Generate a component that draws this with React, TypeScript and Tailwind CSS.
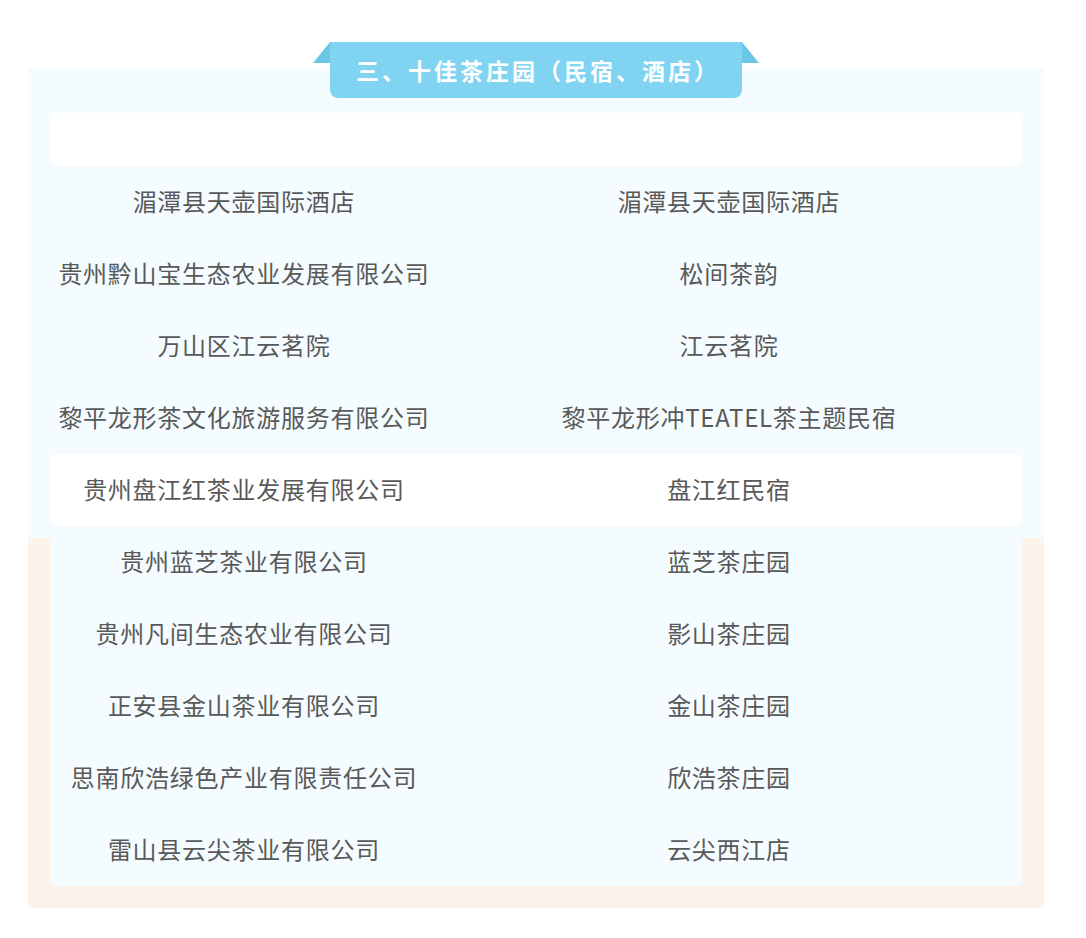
import React from 'react';

const rows: { left: string; right: string; white?: boolean }[] = [
  { left: '湄潭县天壶国际酒店', right: '湄潭县天壶国际酒店' },
  { left: '贵州黔山宝生态农业发展有限公司', right: '松间茶韵' },
  { left: '万山区江云茗院', right: '江云茗院' },
  { left: '黎平龙形茶文化旅游服务有限公司', right: '黎平龙形冲TEATEL茶主题民宿' },
  { left: '贵州盘江红茶业发展有限公司', right: '盘江红民宿', white: true },
  { left: '贵州蓝芝茶业有限公司', right: '蓝芝茶庄园' },
  { left: '贵州凡间生态农业有限公司', right: '影山茶庄园' },
  { left: '正安县金山茶业有限公司', right: '金山茶庄园' },
  { left: '思南欣浩绿色产业有限责任公司', right: '欣浩茶庄园' },
  { left: '雷山县云尖茶业有限公司', right: '云尖西江店' },
];

const App: React.FC = () => {
  return (
    <div
      className="min-h-screen bg-white pt-[42px]"
      style={{ fontFamily: '"Noto Sans CJK SC", "Noto Sans", sans-serif' }}
    >
      <div className="ml-[28px] w-[1016px]">
        {/* Title ribbon */}
        <div className="relative z-10 flex justify-center items-start h-[56px]">
          <svg width="17" height="21" viewBox="0 0 17 21" className="block">
            <polygon points="0,21 17,0 17,21" fill="#6cc6e6" />
          </svg>
          <div className="w-[412px] h-[56px] bg-[#80d4f1] rounded-b-[8px] flex items-center justify-center pl-[4px]">
            <span className="text-white font-bold text-[23px] tracking-[3px] leading-none">
              三、十佳茶庄园（民宿、酒店）
            </span>
          </div>
          <svg width="17" height="21" viewBox="0 0 17 21" className="block">
            <polygon points="0,0 17,21 0,21" fill="#6cc6e6" />
          </svg>
        </div>

        {/* Panel */}
        <div className="-mt-[30px] bg-[linear-gradient(to_bottom,#f4fcff_470px,#fef3ea_470px)] px-[23px] pt-[45px] pb-[22px]">
          <div className="h-[53px] bg-white rounded-[4px]" />
          {rows.map((r, i) => (
            <div
              key={i}
              className={
                r.white
                  ? 'grid grid-cols-[386px_1fr] h-[72px] items-center bg-white rounded-[4px]'
                  : 'grid grid-cols-[386px_1fr] h-[72px] items-center bg-[#f4fcff]'
              }
            >
              <div className="text-center text-[24px] tracking-[0.75px] text-[#595959] leading-none whitespace-nowrap -mt-[2px]">
                {r.left}
              </div>
              <div className="text-center text-[24px] tracking-[0.75px] text-[#595959] leading-none whitespace-nowrap -mt-[2px]">
                {r.right}
              </div>
            </div>
          ))}
        </div>
      </div>
    </div>
  );
};

export default App;
